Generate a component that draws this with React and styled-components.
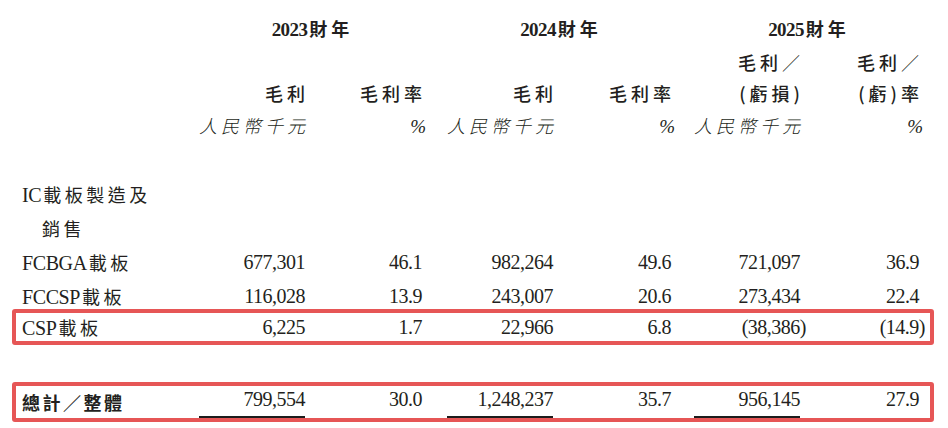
import React from "react";
import styled, { createGlobalStyle } from "styled-components";

const Global = createGlobalStyle`
  html, body { margin: 0; padding: 0; background: #ffffff; }
  body { width: 948px; height: 428px; overflow: hidden; }
`;

const COLS = "177px 106px 117px 131px 118px 129px 119px";
const SERIF = `"Liberation Serif", "Noto Sans CJK TC", serif`;
const CJK = `"Noto Sans CJK TC", "Liberation Serif", sans-serif`;
const INK = "#231f20";

const Page = styled.div`
  padding-top: ${(p) => p.$top}px;
  color: ${INK};
  font-family: ${SERIF};
  display: flex;
  flex-direction: column;
`;

const Row = styled.div`
  box-sizing: border-box;
  margin-left: 12px;
  width: 922px;
  height: ${(p) => p.$h || 34}px;
  margin-top: ${(p) => p.$mt || 0}px;
  padding-left: 6px;
  border: 4px solid ${(p) => (p.$boxed ? "#e65656" : "transparent")};
  border-radius: 3px;
  display: grid;
  grid-template-columns: ${COLS};
  align-items: center;
`;

const YearCell = styled.div`
  grid-column: span 2;
  padding-left: ${(p) => p.$pad || 0}px;
  text-align: center;
  font-weight: 700;
  font-size: 19px;
  white-space: nowrap;
`;

const YearNum = styled.span`
  font-family: ${SERIF};
  letter-spacing: -0.6px;
`;

const YearCJK = styled.span`
  font-family: ${CJK};
  font-weight: 700;
  font-size: 18px;
  letter-spacing: 4px;
  margin-right: -4px;
  margin-left: 2px;
`;

const HeadCell = styled.div`
  text-align: right;
  font-family: ${CJK};
  font-weight: 500;
  font-size: 18px;
  letter-spacing: 4px;
  white-space: nowrap;
  & > span { margin-right: -4px; }
`;

const Slash = styled.span`
  font-weight: 300;
`;

const UnitCell = styled.div`
  text-align: right;
  font-family: ${CJK};
  font-style: italic;
  font-weight: 300;
  font-size: 18px;
  letter-spacing: 4px;
  white-space: nowrap;
  & > span { margin-right: -4px; }
`;

const Pct = styled.span`
  font-family: ${SERIF};
  font-style: italic;
  font-size: 19px;
  letter-spacing: 0;
  margin-right: 3px;
`;

const Label = styled.div`
  padding-left: ${(p) => (p.$indent ? 20 : 0)}px;
  font-size: 20px;
  white-space: nowrap;
  letter-spacing: -0.4px;
`;

const LabelCJK = styled.span`
  font-family: ${CJK};
  font-weight: ${(p) => (p.$bold ? 700 : 400)};
  font-size: 18px;
  letter-spacing: ${(p) => (p.$bold ? 2.5 : 3.5)}px;
  margin-left: ${(p) => (p.$gap ? 2 : 0)}px;
`;

const Num = styled.div`
  text-align: right;
  font-size: 20px;
  letter-spacing: -0.5px;
  white-space: nowrap;
`;

const Hang = styled.span`
  margin-right: -6px;
`;

const Under = styled.span`
  display: inline-block;
  width: 106px;
  text-align: right;
  line-height: 26px;
  padding-bottom: 4px;
  border-bottom: 2px solid ${(p) => (p.$line ? "#1c1c1c" : "transparent")};
`;

const Spacer = styled.div`
  height: ${(p) => p.$h}px;
`;

const years = [
  { t: "2023", pad: 0 },
  { t: "2024", pad: 25 },
  { t: "2025", pad: 24 },
];

const body = [
  ["FCBGA", "載板", ["677,301", "46.1", "982,264", "49.6", "721,097", "36.9"]],
  ["FCCSP", "載板", ["116,028", "13.9", "243,007", "20.6", "273,434", "22.4"]],
];

function Neg({ v }) {
  if (v.startsWith("(")) {
    return (
      <>
        {v.slice(0, -1)}
        <Hang>)</Hang>
      </>
    );
  }
  return v;
}

export default function App() {
  return (
    <>
      <Global />
      <Page $top={11}>
        <Row $h={34}>
          <div />
          {years.map((y) => (
            <YearCell key={y.t} $pad={y.pad}>
              <YearNum>{y.t}</YearNum>
              <YearCJK>財年</YearCJK>
            </YearCell>
          ))}
        </Row>
        <Row $h={31}>
          <div />
          <div />
          <div />
          <div />
          <div />
          <HeadCell>
            毛利<Slash>／</Slash>
          </HeadCell>
          <HeadCell>
            毛利<Slash>／</Slash>
          </HeadCell>
        </Row>
        <Row $h={32}>
          <div />
          <HeadCell>
            毛<span>利</span>
          </HeadCell>
          <HeadCell>
            毛利<span>率</span>
          </HeadCell>
          <HeadCell>
            毛<span>利</span>
          </HeadCell>
          <HeadCell>
            毛利<span>率</span>
          </HeadCell>
          <HeadCell>
            (虧損<span>)</span>
          </HeadCell>
          <HeadCell>
            (虧)<span>率</span>
          </HeadCell>
        </Row>
        <Row $h={32}>
          <div />
          <UnitCell>
            人民幣千<span>元</span>
          </UnitCell>
          <UnitCell>
            <Pct>%</Pct>
          </UnitCell>
          <UnitCell>
            人民幣千<span>元</span>
          </UnitCell>
          <UnitCell>
            <Pct>%</Pct>
          </UnitCell>
          <UnitCell>
            人民幣千<span>元</span>
          </UnitCell>
          <UnitCell>
            <Pct>%</Pct>
          </UnitCell>
        </Row>
        <Spacer $h={37} />
        <Row $h={34}>
          <Label>
            IC<LabelCJK $gap>載板製造及</LabelCJK>
          </Label>
        </Row>
        <Row $h={34}>
          <Label $indent>
            <LabelCJK>銷售</LabelCJK>
          </Label>
        </Row>
        {body.map(([en, zh, vals]) => (
          <Row key={en} $h={34}>
            <Label>
              {en}
              <LabelCJK $gap>{zh}</LabelCJK>
            </Label>
            {vals.map((v, i) => (
              <Num key={i}>{v}</Num>
            ))}
          </Row>
        ))}
        <Row $boxed $h={36} $mt={-4}>
          <Label>
            CSP<LabelCJK $gap>載板</LabelCJK>
          </Label>
          {["6,225", "1.7", "22,966", "6.8", "(38,386)", "(14.9)"].map((v, i) => (
            <Num key={i}>
              <Neg v={v} />
            </Num>
          ))}
        </Row>
        <Spacer $h={37} />
        <Row $boxed $h={40}>
          <Label>
            <LabelCJK $bold>總計／整體</LabelCJK>
          </Label>
          {["799,554", "30.0", "1,248,237", "35.7", "956,145", "27.9"].map((v, i) => (
            <Num key={i}>
              <Under $line={i % 2 === 0}>{v}</Under>
            </Num>
          ))}
        </Row>
      </Page>
    </>
  );
}
